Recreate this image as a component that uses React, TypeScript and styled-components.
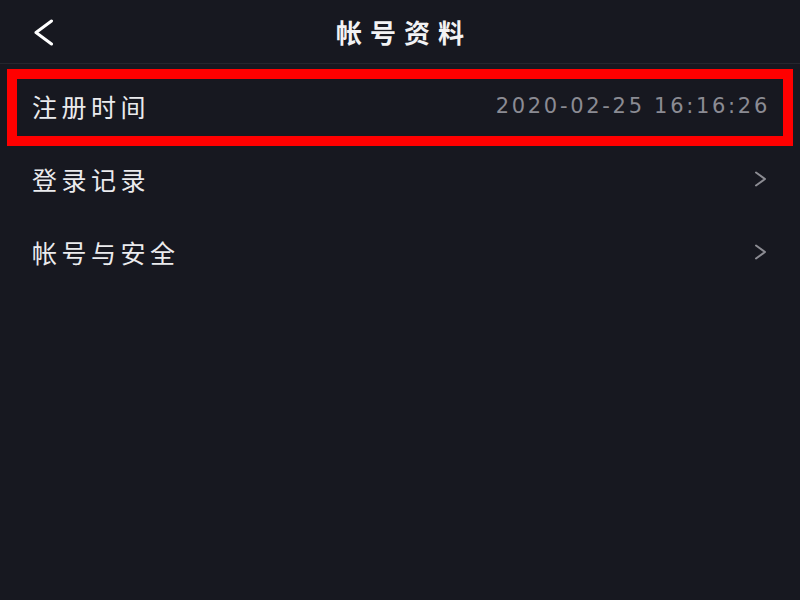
import styled, { createGlobalStyle } from 'styled-components';

const GlobalStyle = createGlobalStyle`
  html, body {
    margin: 0;
    padding: 0;
    background: #171820;
  }
  body {
    font-family: 'Noto Sans CJK SC', 'Noto Sans', sans-serif;
  }
`;

const rows = [
  { label: '注册时间', value: '2020-02-25 16:16:26', highlighted: true },
  { label: '登录记录', arrow: true },
  { label: '帐号与安全', arrow: true },
];

function App() {
  return (
    <Page>
      <GlobalStyle />
      <Header>
        <BackButton aria-label='返回'>
          <svg width='21' height='27' viewBox='0 0 21 27' fill='none'>
            <polyline
              points='18.5,2 3,13.5 18.5,25'
              stroke='#ffffff'
              strokeWidth='3'
              strokeLinecap='round'
              strokeLinejoin='round'
            />
          </svg>
        </BackButton>
        <Title>帐号资料</Title>
        <span />
      </Header>
      <List>
        {rows.map((row) => (
          <Row
            key={row.label}
            $highlighted={row.highlighted}
          >
            <Label>{row.label}</Label>
            {row.value && <Value>{row.value}</Value>}
            {row.arrow && (
              <svg width='13' height='16' viewBox='0 0 13 16' fill='none'>
                <polyline
                  points='2,1.5 11,8 2,14.5'
                  stroke='#8c8c93'
                  strokeWidth='2'
                  strokeLinecap='round'
                  strokeLinejoin='round'
                />
              </svg>
            )}
          </Row>
        ))}
      </List>
    </Page>
  );
}

export default App;

const Page = styled.div`
  width: 800px;
  height: 600px;
  background: #171820;
  overflow: hidden;
`;

const Header = styled.div`
  height: 63px;
  display: grid;
  grid-template-columns: 1fr auto 1fr;
  align-items: center;
  padding: 0 33px;
  border-bottom: 1px solid #25262e;
`;

const BackButton = styled.button`
  justify-self: start;
  background: none;
  border: none;
  padding: 0;
  margin-top: 1px;
  display: flex;
  cursor: pointer;
`;

const Title = styled.h1`
  margin: 0;
  font-size: 26px;
  font-weight: 700;
  letter-spacing: 8px;
  margin-right: -8px;
  color: #f2f2f4;
`;

const List = styled.div`
  display: flex;
  flex-direction: column;
  padding-top: 7px;
`;

const Row = styled.div<{ $highlighted?: boolean }>`
  position: relative;
  box-sizing: border-box;
  height: 73px;
  display: flex;
  align-items: center;
  justify-content: space-between;
  padding: 0 33px 4px 32px;

  &::after {
    content: '';
    display: ${(p) => (p.$highlighted ? 'block' : 'none')};
    position: absolute;
    top: -2px;
    bottom: -2px;
    left: 7px;
    right: 7px;
    border: 10px solid #ff0000;
    pointer-events: none;
  }
`;

const Label = styled.span`
  font-size: 25px;
  letter-spacing: 4.5px;
  color: #ebebee;
`;

const Value = styled.span`
  font-family: 'DejaVu Sans', sans-serif;
  font-size: 21px;
  letter-spacing: 2.7px;
  margin-right: -3px;
  color: #8b8b93;
`;
